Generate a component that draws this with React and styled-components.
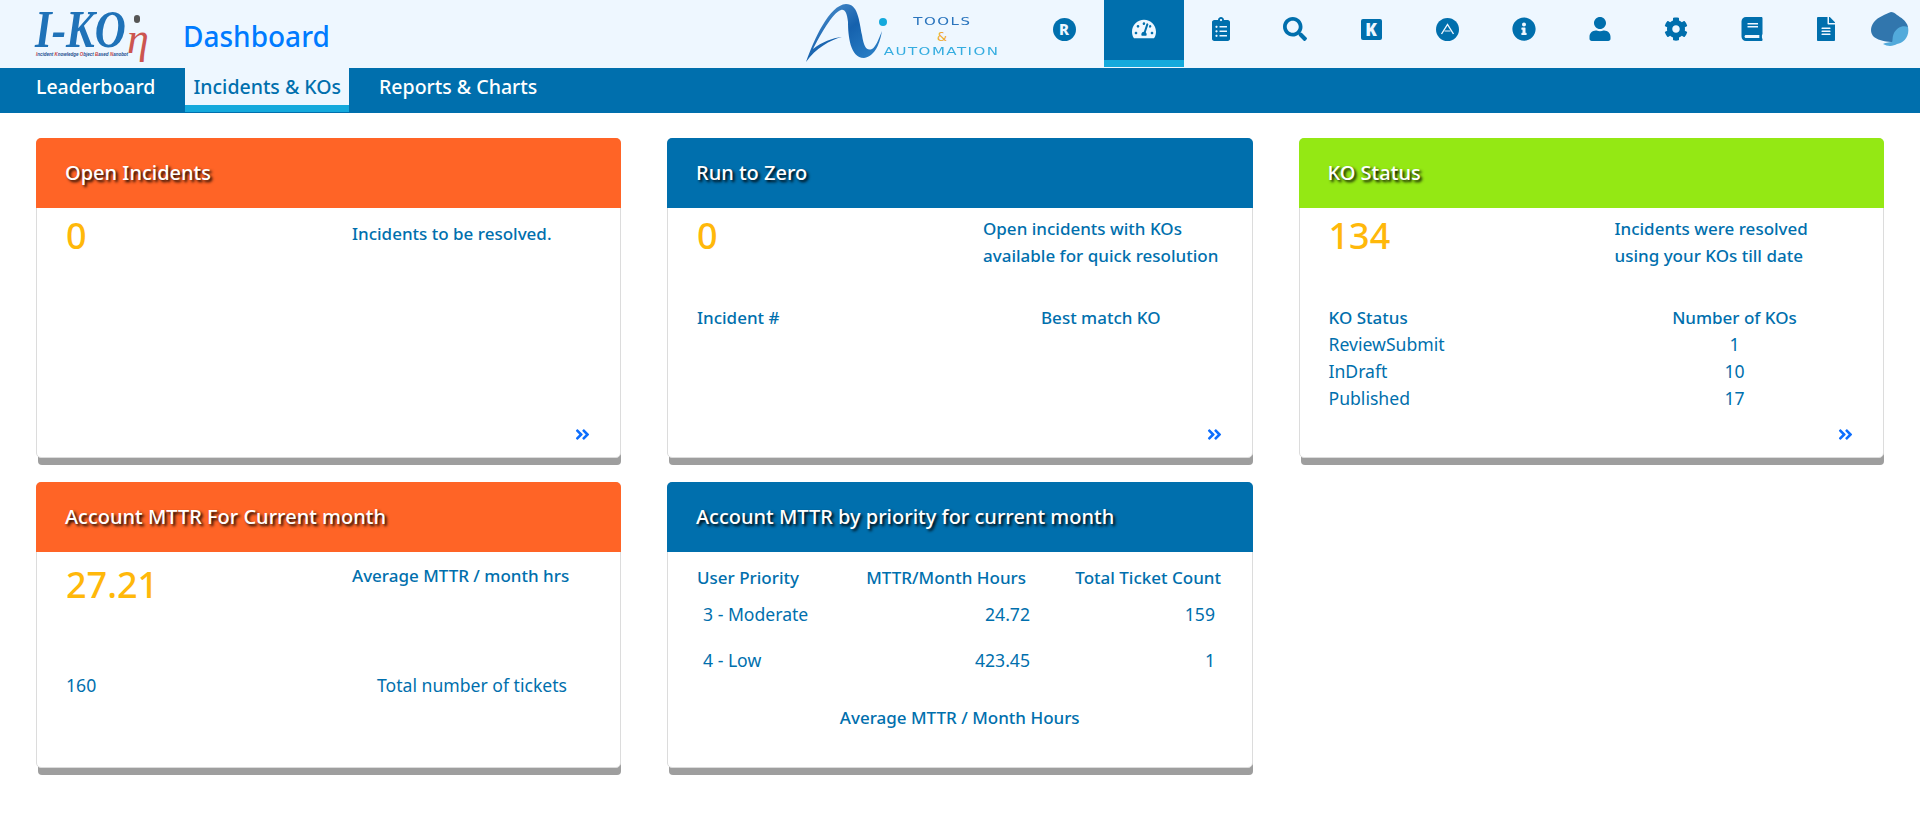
import styled, { createGlobalStyle } from "styled-components";
import {
  FaTachometerAlt,
  FaClipboardList,
  FaSearch,
  FaInfoCircle,
  FaUser,
  FaCog,
  FaBook,
  FaFileAlt,
  FaAngleDoubleRight,
} from "react-icons/fa";

const BLUE = "#006fad";

const GlobalStyle = createGlobalStyle`
  html, body {
    margin: 0;
    padding: 0;
    background: #fff;
    font-family: "Noto Sans", "Open Sans", sans-serif;
    color: ${BLUE};
  }
`;

const Header = styled.header`
  display: flex;
  align-items: flex-start;
  height: 68px;
  background: #eef7ff;
`;

const BrandLogo = styled.div`
  position: relative;
  width: 120px;
  height: 60px;
  margin: 7px 0 0 35px;
  font-family: "Liberation Serif", serif;
`;

const BrandName = styled.span`
  display: block;
  width: fit-content;
  height: 45px;
  font-size: 43px;
  line-height: 37px;
  font-weight: 700;
  font-style: italic;
  color: #1f72b8;
  transform: scaleY(1.22);
  transform-origin: top left;
  filter: blur(0.4px);
`;

const BrandEta = styled.span`
  position: absolute;
  left: 92px;
  top: 17px;
  font-size: 44px;
  line-height: 30px;
  font-style: italic;
  color: #cc5550;
`;

const BrandDot = styled.span`
  position: absolute;
  left: 99px;
  top: 8px;
  width: 6px;
  height: 8px;
  border-radius: 3px;
  background: #555;
`;

const BrandTag = styled.span`
  display: block;
  width: fit-content;
  margin-left: 1px;
  font-family: "Liberation Sans", sans-serif;
  font-size: 4.5px;
  line-height: 6px;
  font-weight: 700;
  font-style: italic;
  white-space: nowrap;
  color: #1f4f8f;
`;

const TagInitial = styled.span`
  color: #c8423c;
`;

const PageTitle = styled.h1`
  margin: 15px 0 0 28px;
  font-size: 28px;
  line-height: 42px;
  font-weight: 500;
  color: #007bff;
`;

const ToolsLogo = styled.div`
  display: flex;
  align-items: flex-start;
  margin-left: auto;
`;

const ToolsMark = styled.svg`
  filter: blur(0.4px);
`;

const ToolsText = styled.div`
  display: flex;
  flex-direction: column;
  align-items: center;
  width: 112px;
  margin: 14px 0 0 -13px;
  font-family: "DejaVu Sans", sans-serif;
  line-height: 15px;
  text-transform: uppercase;
`;

const ToolsWord = styled.span`
  display: inline-block;
  color: ${(p) => p.$color};
  font-size: ${(p) => p.$size}px;
  letter-spacing: ${(p) => (p.$wide ? 1 : 0)}px;
  transform: scaleX(${(p) => (p.$wide ? 1.5 : 1)});
`;

const IconBar = styled.nav`
  display: flex;
  align-items: flex-start;
  margin-left: 28px;
  padding-right: 2px;
`;

const IconItem = styled.a`
  display: flex;
  align-items: center;
  justify-content: center;
  box-sizing: border-box;
  width: ${(p) => p.$width}px;
  height: ${(p) => (p.$active ? 67 : 60)}px;
  padding-bottom: 2px;
  margin-left: ${(p) => (p.$active ? 2 : 0)}px;
  color: ${(p) => (p.$active ? "#eef7ff" : BLUE)};
  background: ${(p) => (p.$active ? BLUE : "transparent")};
  border-bottom: ${(p) => (p.$active ? "7px solid #14a9dc" : "0")};
  font-size: 24px;
`;

const RoundBadge = styled.span`
  display: flex;
  align-items: center;
  justify-content: center;
  width: 23px;
  height: 23px;
  border-radius: 50%;
  background: ${BLUE};
  color: #eef7ff;
  font-size: 15px;
  line-height: 1;
  font-weight: 800;
`;

const SquareBadge = styled(RoundBadge)`
  width: 21px;
  height: 21px;
  border-radius: 2px;
  font-size: 17px;
  font-weight: 900;
`;

const SubNav = styled.nav`
  display: flex;
  height: 45px;
  padding-left: 28px;
  gap: 22px;
  background: ${BLUE};
`;

const SubTab = styled.a`
  box-sizing: border-box;
  height: 44px;
  padding: 0 8px;
  font-size: 19.5px;
  line-height: 37px;
  font-weight: 500;
  color: ${(p) => (p.$active ? BLUE : "#fff")};
  background: ${(p) => (p.$active ? "#eef7ff" : "transparent")};
  border-bottom: ${(p) => (p.$active ? "7px solid #14a9dc" : "0")};
`;

const Board = styled.main`
  display: grid;
  grid-template-columns: 585px 585.5px 585px;
  column-gap: 46px;
  row-gap: 24px;
  align-items: start;
  padding: 25px 0 40px 36px;
`;

const Card = styled.section`
  display: flex;
  flex-direction: column;
  box-sizing: border-box;
  height: ${(p) => p.$height}px;
  border: 1px solid #dcdcdc;
  border-radius: 5px;
  background: #fff;
  box-shadow: 1px 8px 0 -1px #9e9e9e;
`;

const CardHead = styled.h2`
  flex: none;
  box-sizing: border-box;
  height: 70px;
  margin: -1px -1px 0;
  padding: 0 29px;
  border-radius: 5px 5px 0 0;
  background: ${(p) => p.$color};
  font-size: 20px;
  line-height: 69px;
  font-weight: 500;
  color: #fff;
  text-shadow: 2px 2px 3px #000;
`;

const CardBody = styled.div`
  display: flex;
  flex: 1;
  flex-direction: column;
  padding: 0 29px;
`;

const Stat = styled.div`
  display: grid;
  grid-template-columns: 286px 1fr;
  height: ${(p) => p.$height || 96}px;
`;

const Count = styled.div`
  padding-top: ${(p) => p.$top || 1}px;
  font-size: 36px;
  line-height: 54px;
  font-weight: 500;
  color: #ffb80a;
`;

const StatNote = styled.div`
  padding-top: ${(p) => p.$top || 7}px;
  font-size: 17px;
  line-height: 27px;
  font-weight: 500;
`;

const Row = styled.div`
  display: grid;
  grid-template-columns: ${(p) => p.$cols};
  font-size: ${(p) => (p.$head ? 17 : 17.6)}px;
  line-height: 27px;
  font-weight: ${(p) => (p.$head ? 500 : 400)};
`;

const Cell = styled.span`
  text-align: ${(p) => p.$align || "left"};
  padding: ${(p) => p.$pad || 0};
`;

const MoreLink = styled.a`
  display: flex;
  justify-content: flex-end;
  margin-top: auto;
  padding-bottom: 14px;
  color: #0d6efd;
  font-size: 17px;
  line-height: 17px;
`;

const PriorityRow = styled(Row)`
  margin-bottom: ${(p) => p.$gap || 0}px;
`;

const CenterNote = styled.div`
  margin-top: 30px;
  text-align: center;
  font-size: 17px;
  line-height: 27px;
  font-weight: 500;
`;

const AiMark = () => (
  <ToolsMark width="95" height="66" viewBox="0 0 95 66">
    <defs>
      <linearGradient id="swoosh" x1="0" y1="0" x2="1" y2="1">
        <stop offset="0" stopColor="#5b9bd5" />
        <stop offset="0.5" stopColor="#1561ad" />
        <stop offset="1" stopColor="#2f86cc" />
      </linearGradient>
    </defs>
    <path
      d="M2 62 C10 40 25 5 42 4 C54 4 55 20 58 35 C60 48 63 51 68 49 C72 47 75 38 78 31 C76 42 72 56 60 58 C46 58 44 35 44 22 C43 13 41 9 37 10 C28 13 16 36 9 49 C18 42 28 38 38 37 C26 40 12 48 2 62 Z"
      fill="url(#swoosh)"
    />
    <circle cx="79" cy="22" r="4" fill="#14a9dc" />
  </ToolsMark>
);

const SpadeMark = () => (
  <ToolsMark width="40" height="36" viewBox="0 0 40 36">
    <path
      d="M21 1 C16 3 8 6 4 11 C0 16 0 22 4 26 C9 30 18 31 23 31 C24 24 28 18 38 16 C37 10 30 6 27 4 C25 2 23 1 21 1 Z"
      fill="#3176ad"
    />
    <path
      d="M38 16 C32 14 27 17 24 22 C22 26 23 30 22 31 C18 31 15 32 13 33 C18 36 24 35 27 33 C33 32 40 26 38 16 Z"
      fill="#52aadb"
    />
  </ToolsMark>
);

const ApexIcon = () => (
  <svg width="23" height="23" viewBox="0 0 23 23">
    <circle cx="11.5" cy="11.5" r="11.5" fill={BLUE} />
    <path d="M5.5 16 L11.5 6.5 L17.5 16" fill="none" stroke="#eef7ff" strokeWidth="1.4" />
    <path d="M8.5 13 H14.5" stroke="#eef7ff" strokeWidth="1" />
  </svg>
);

const icons = [
  { key: "r", width: 76, icon: <RoundBadge>R</RoundBadge> },
  { key: "gauge", width: 80, active: true, icon: <FaTachometerAlt /> },
  { key: "list", width: 73, icon: <FaClipboardList /> },
  { key: "search", width: 76, icon: <FaSearch /> },
  { key: "k", width: 76, icon: <SquareBadge>K</SquareBadge> },
  { key: "a", width: 76, icon: <ApexIcon /> },
  { key: "info", width: 77, icon: <FaInfoCircle /> },
  { key: "user", width: 76, icon: <FaUser /> },
  { key: "cog", width: 76, icon: <FaCog /> },
  { key: "book", width: 76, icon: <FaBook /> },
  { key: "file", width: 72, icon: <FaFileAlt /> },
  { key: "spade", width: 56, icon: <SpadeMark /> },
];

const KO_COLS = "1fr 238px";
const MTTR_COLS = "167px 166px 191px";

const More = () => (
  <MoreLink>
    <FaAngleDoubleRight />
  </MoreLink>
);

const App = () => (
  <>
    <GlobalStyle />
    <Header>
      <BrandLogo>
        <BrandName>I-KO</BrandName>
        <BrandEta>η</BrandEta>
        <BrandDot />
        <BrandTag>
          <TagInitial>I</TagInitial>ncident <TagInitial>K</TagInitial>nowledge{" "}
          <TagInitial>O</TagInitial>bject <TagInitial>B</TagInitial>ased{" "}
          <TagInitial>N</TagInitial>anobot
        </BrandTag>
      </BrandLogo>
      <PageTitle>Dashboard</PageTitle>
      <ToolsLogo>
        <AiMark />
        <ToolsText>
          <ToolsWord $color="#2a74bd" $size={10} $wide>Tools</ToolsWord>
          <ToolsWord $color="#f0a92e" $size={13}>&amp;</ToolsWord>
          <ToolsWord $color="#35ade0" $size={10} $wide>Automation</ToolsWord>
        </ToolsText>
      </ToolsLogo>
      <IconBar>
        {icons.map((item) => (
          <IconItem key={item.key} $width={item.width} $active={item.active}>
            {item.icon}
          </IconItem>
        ))}
      </IconBar>
    </Header>
    <SubNav>
      <SubTab>Leaderboard</SubTab>
      <SubTab $active>Incidents &amp; KOs</SubTab>
      <SubTab>Reports &amp; Charts</SubTab>
    </SubNav>
    <Board>
      <Card $height={320}>
        <CardHead $color="#ff6426">Open Incidents</CardHead>
        <CardBody>
          <Stat>
            <Count>0</Count>
            <StatNote $top={12}>Incidents to be resolved.</StatNote>
          </Stat>
          <More />
        </CardBody>
      </Card>

      <Card $height={320}>
        <CardHead $color={BLUE}>Run to Zero</CardHead>
        <CardBody>
          <Stat>
            <Count>0</Count>
            <StatNote>
              Open incidents with KOs
              <br />
              available for quick resolution
            </StatNote>
          </Stat>
          <Row $head $cols="344px 1fr">
            <Cell>Incident #</Cell>
            <Cell>Best match KO</Cell>
          </Row>
          <More />
        </CardBody>
      </Card>

      <Card $height={320}>
        <CardHead $color="#94e814">KO Status</CardHead>
        <CardBody>
          <Stat>
            <Count>134</Count>
            <StatNote>
              Incidents were resolved
              <br />
              using your KOs till date
            </StatNote>
          </Stat>
          <Row $head $cols={KO_COLS}>
            <Cell>KO Status</Cell>
            <Cell $align="center">Number of KOs</Cell>
          </Row>
          <Row $cols={KO_COLS}>
            <Cell>ReviewSubmit</Cell>
            <Cell $align="center">1</Cell>
          </Row>
          <Row $cols={KO_COLS}>
            <Cell>InDraft</Cell>
            <Cell $align="center">10</Cell>
          </Row>
          <Row $cols={KO_COLS}>
            <Cell>Published</Cell>
            <Cell $align="center">17</Cell>
          </Row>
          <More />
        </CardBody>
      </Card>

      <Card $height={286}>
        <CardHead $color="#ff6426">Account MTTR For Current month</CardHead>
        <CardBody>
          <Stat $height={120}>
            <Count $top={6}>27.21</Count>
            <StatNote $top={10}>Average MTTR / month hrs</StatNote>
          </Stat>
          <Row $cols="311px 1fr">
            <Cell>160</Cell>
            <Cell>Total number of tickets</Cell>
          </Row>
        </CardBody>
      </Card>

      <Card $height={286}>
        <CardHead $color={BLUE}>Account MTTR by priority for current month</CardHead>
        <CardBody>
          <PriorityRow $head $cols={MTTR_COLS} $gap={10}>
            <Cell $pad="12px 0 0">User Priority</Cell>
            <Cell $align="right" $pad="12px 4px 0 0">MTTR/Month Hours</Cell>
            <Cell $align="right" $pad="12px 0 0">Total Ticket Count</Cell>
          </PriorityRow>
          <PriorityRow $cols={MTTR_COLS} $gap={19}>
            <Cell $pad="0 0 0 6px">3 - Moderate</Cell>
            <Cell $align="right">24.72</Cell>
            <Cell $align="right" $pad="0 6px 0 0">159</Cell>
          </PriorityRow>
          <PriorityRow $cols={MTTR_COLS}>
            <Cell $pad="0 0 0 6px">4 - Low</Cell>
            <Cell $align="right">423.45</Cell>
            <Cell $align="right" $pad="0 6px 0 0">1</Cell>
          </PriorityRow>
          <CenterNote>Average MTTR / Month Hours</CenterNote>
        </CardBody>
      </Card>
    </Board>
  </>
);

export default App;
